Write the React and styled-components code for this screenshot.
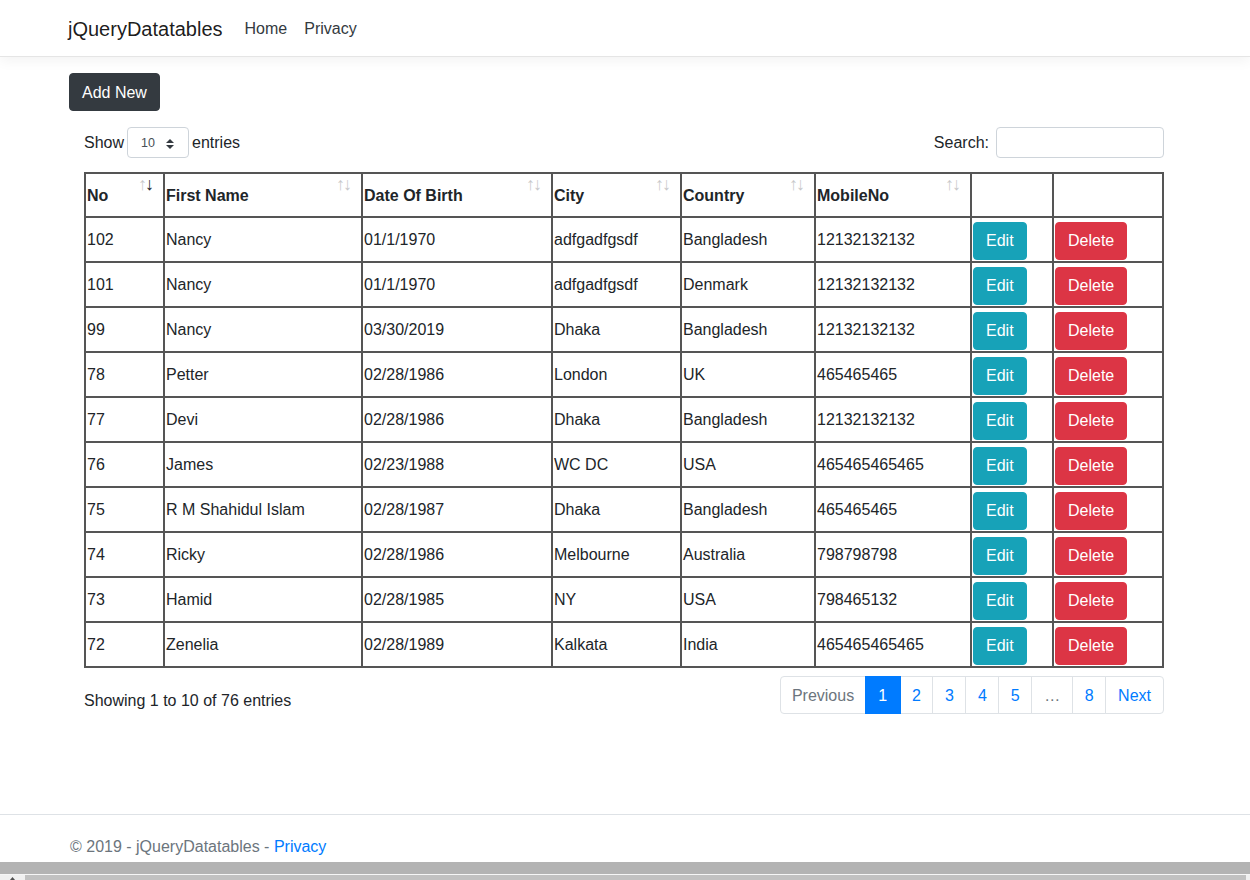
import React from "react";
import styled, { createGlobalStyle } from "styled-components";

const Global = createGlobalStyle`
  html, body { margin: 0; padding: 0; background: #fff; }
  body {
    font-family: "Liberation Sans", Arial, sans-serif;
    font-size: 16px;
    line-height: 1.5;
    color: #212529;
  }
  * { box-sizing: border-box; }
`;

const Page = styled.div`
  min-height: 880px;
  display: flex;
  flex-direction: column;
  overflow: hidden;
`;

const Navbar = styled.header`
  height: 57px;
  border-bottom: 1px solid #e5e5e5;
  box-shadow: 0 4px 12px rgba(0, 0, 0, 0.05);
  display: flex;
  align-items: center;
  padding-top: 2px;
`;

const Container = styled.div`
  width: 1140px;
  margin: 0 auto;
  padding: 0 15px;
`;

const NavInner = styled(Container)`
  display: flex;
  align-items: center;
`;

const Brand = styled.a`
  font-size: 20px;
  color: rgba(0, 0, 0, 0.9);
  text-decoration: none;
  margin-right: 22px;
  margin-left: -2px;
`;

const NavLink = styled.a`
  font-size: 16px;
  color: #343a40;
  text-decoration: none;
  margin-right: ${(p) => p.$gap || 0}px;
`;

const Main = styled(Container)`
  flex: 1;
  padding-top: 16px;
`;

const Button = styled.button`
  font-family: inherit;
  font-size: 16px;
  line-height: 24px;
  padding: 6px 12px;
  border: 1px solid ${(p) => p.$bg};
  background: ${(p) => p.$bg};
  color: #fff;
  border-radius: 4px;
  cursor: pointer;
  display: inline-block;
  vertical-align: middle;
`;

const AddButton = styled(Button)`
  margin-left: -1px;
  padding-top: 7px;
  padding-bottom: 5px;
`;

const Wrapper = styled.div`
  margin: 16px 16px 0 14px;
`;

const TopBar = styled.div`
  display: flex;
  justify-content: space-between;
  align-items: center;
  height: 31px;
`;

const Label = styled.label`
  display: flex;
  align-items: center;
  gap: ${(p) => p.$gap || 3}px;
  font-size: 16px;
`;

const SelectBox = styled.div`
  width: 62px;
  height: 31px;
  border: 1px solid #ced4da;
  border-radius: 4px;
  display: flex;
  align-items: center;
  justify-content: space-between;
  padding: 2px 14px 0 13px;
  font-size: 12.5px;
  color: #495057;
`;

const SearchInput = styled.input`
  width: 168px;
  height: 31px;
  border: 1px solid #ced4da;
  border-radius: 4px;
  font-family: inherit;
  font-size: 14px;
  padding: 4px 8px;
`;

const Table = styled.table`
  width: 1080px;
  table-layout: fixed;
  border-collapse: separate;
  border-spacing: 0;
  border: 1px solid #555;
  margin-top: 14px;
`;

const Th = styled.th`
  position: relative;
  border: 1px solid #555;
  padding: 1px 30px 8px 1px;
  height: 44px;
  text-align: left;
  vertical-align: bottom;
  font-weight: bold;
  font-size: 16px;
  line-height: 24px;
  white-space: nowrap;
  color: #212529;
`;

const Arrow = styled.span`
  position: absolute;
  top: 0px;
  right: ${(p) => p.$right}px;
  font-size: 18px;
  line-height: 20px;
  font-weight: normal;
  color: #212529;
  opacity: ${(p) => (p.$active ? 1 : 0.25)};
`;

const Td = styled.td`
  border: 1px solid #555;
  padding: 1px;
  height: 45px;
  vertical-align: middle;
  font-size: 16px;
  line-height: 24px;
  white-space: nowrap;
  overflow: hidden;
`;

const BtnTd = styled(Td)`
  padding-top: 4px;
`;

const BottomBar = styled.div`
  display: flex;
  justify-content: space-between;
  align-items: center;
  margin-top: 8px;
`;

const Info = styled.div`
  font-size: 16px;
  padding-top: 11px;
`;

const Pager = styled.ul`
  display: flex;
  list-style: none;
  margin: 0;
  padding: 0;
`;

const PageItem = styled.li`
  font-size: 16px;
  line-height: 20px;
  padding: 9px ${(p) => p.$px || 11.5}px 7px;
  border: 1px solid ${(p) => (p.$active ? "#007bff" : "#dee2e6")};
  margin-left: -1px;
  background: ${(p) => (p.$active ? "#007bff" : "#fff")};
  color: ${(p) => (p.$active ? "#fff" : p.$muted ? "#6c757d" : "#007bff")};
  position: relative;
  z-index: ${(p) => (p.$active ? 1 : 0)};
  &:first-child {
    margin-left: 0;
    border-radius: 4px 0 0 4px;
  }
  &:last-child {
    border-radius: 0 4px 4px 0;
  }
`;

const Footer = styled.footer`
  border-top: 1px solid #dee2e6;
  line-height: 60px;
  padding-top: 2px;
  padding-bottom: 3px;
  font-size: 16px;
  color: #6c757d;
`;

const FooterLink = styled.a`
  color: #007bff;
  text-decoration: none;
`;

const Scrollbar = styled.div`
  position: fixed;
  left: 0;
  right: 0;
  bottom: 0;
  height: 18px;
  display: flex;
  flex-direction: column;
`;

const ScrollBand = styled.div`
  height: 12px;
  background: #b3b3b3;
`;

const ScrollTrack = styled.div`
  flex: 1;
  border-top: 1px solid #f6f6f6;
  background: #f0f0f0;
  display: flex;
  padding: 0 4px 0 0;
`;

const ScrollArrow = styled.div`
  width: 25px;
  display: flex;
  justify-content: center;
  align-items: flex-end;
`;

const Thumb = styled.div`
  flex: 1;
  background: #c1c1c1;
`;

const rows = [
  ["102", "Nancy", "01/1/1970", "adfgadfgsdf", "Bangladesh", "12132132132"],
  ["101", "Nancy", "01/1/1970", "adfgadfgsdf", "Denmark", "12132132132"],
  ["99", "Nancy", "03/30/2019", "Dhaka", "Bangladesh", "12132132132"],
  ["78", "Petter", "02/28/1986", "London", "UK", "465465465"],
  ["77", "Devi", "02/28/1986", "Dhaka", "Bangladesh", "12132132132"],
  ["76", "James", "02/23/1988", "WC DC", "USA", "465465465465"],
  ["75", "R M Shahidul Islam", "02/28/1987", "Dhaka", "Bangladesh", "465465465"],
  ["74", "Ricky", "02/28/1986", "Melbourne", "Australia", "798798798"],
  ["73", "Hamid", "02/28/1985", "NY", "USA", "798465132"],
  ["72", "Zenelia", "02/28/1989", "Kalkata", "India", "465465465465"],
];

const headers = ["No", "First Name", "Date Of Birth", "City", "Country", "MobileNo"];
const widths = [79, 198, 190, 129, 134, 156, 82, 110];

export default function App() {
  return (
    <Page>
      <Global />
      <Navbar>
        <NavInner>
          <Brand>jQueryDatatables</Brand>
          <NavLink $gap={17}>Home</NavLink>
          <NavLink>Privacy</NavLink>
        </NavInner>
      </Navbar>
      <Main>
        <AddButton $bg="#343a40">Add New</AddButton>
        <Wrapper>
          <TopBar>
            <Label>
              Show
              <SelectBox>
                <span>10</span>
                <svg width="8" height="10" viewBox="0 0 8 10">
                  <path d="M4 0 L8 4 L0 4 Z M4 10 L8 6 L0 6 Z" fill="#343a40" />
                </svg>
              </SelectBox>
              entries
            </Label>
            <Label $gap={7}>
              Search:
              <SearchInput type="search" />
            </Label>
          </TopBar>
          <Table>
            <colgroup>
              {widths.map((w, i) => (
                <col key={i} style={{ width: w }} />
              ))}
            </colgroup>
            <thead>
              <tr>
                {headers.map((h, i) => (
                  <Th key={h}>
                    {h}
                    <Arrow $right={16}>↑</Arrow>
                    <Arrow $right={9} $active={i === 0}>↓</Arrow>
                  </Th>
                ))}
                <Th />
                <Th />
              </tr>
            </thead>
            <tbody>
              {rows.map((r) => (
                <tr key={r[0]}>
                  {r.map((c, i) => (
                    <Td key={i}>{c}</Td>
                  ))}
                  <BtnTd>
                    <Button $bg="#17a2b8">Edit</Button>
                  </BtnTd>
                  <BtnTd>
                    <Button $bg="#dc3545">Delete</Button>
                  </BtnTd>
                </tr>
              ))}
            </tbody>
          </Table>
          <BottomBar>
            <Info>Showing 1 to 10 of 76 entries</Info>
            <Pager>
              <PageItem $muted $px={10.5}>Previous</PageItem>
              <PageItem $active $px={12.5}>1</PageItem>
              <PageItem>2</PageItem>
              <PageItem>3</PageItem>
              <PageItem>4</PageItem>
              <PageItem>5</PageItem>
              <PageItem $muted $px={12}>…</PageItem>
              <PageItem>8</PageItem>
              <PageItem $px={12}>Next</PageItem>
            </Pager>
          </BottomBar>
        </Wrapper>
      </Main>
      <Footer>
        <Container>
          © 2019 - jQueryDatatables - <FooterLink>Privacy</FooterLink>
        </Container>
      </Footer>
      <Scrollbar>
        <ScrollBand />
        <ScrollTrack>
          <ScrollArrow>
            <svg width="5" height="3" viewBox="0 0 5 3">
              <path d="M0 3 L2.5 0 L5 3 Z" fill="#505050" />
            </svg>
          </ScrollArrow>
          <Thumb />
        </ScrollTrack>
      </Scrollbar>
    </Page>
  );
}
